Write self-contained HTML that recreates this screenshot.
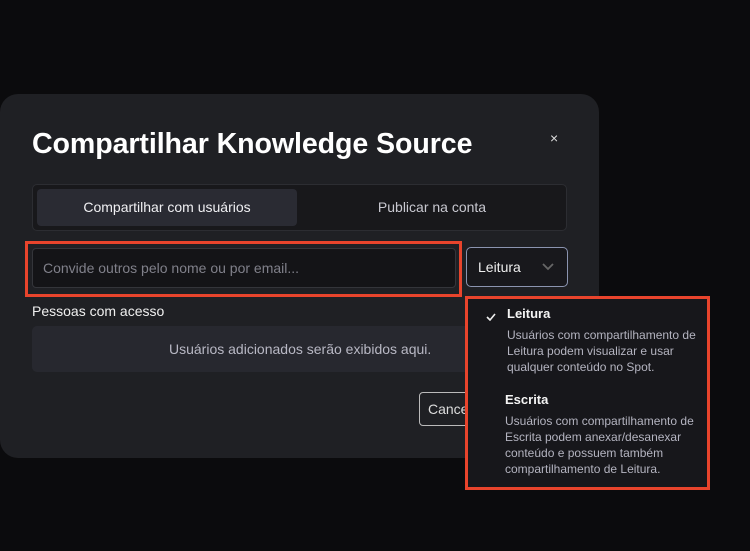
<!DOCTYPE html>
<html><head><meta charset="utf-8"><style>
*{box-sizing:border-box;margin:0;padding:0}
body{width:750px;height:551px;background:#0b0b0d;font-family:"Liberation Sans",sans-serif;position:relative;overflow:hidden;color:#fff}
.a{position:absolute}
.modal{left:0;top:94px;width:599px;height:364px;background:#1f2024;border-radius:18px}
.title{left:32px;top:128px;font-size:28.6px;font-weight:bold;letter-spacing:-0.1px;white-space:nowrap}
.close{left:550px;top:130px;font-size:14px;color:#ddd}
.tabs{left:32px;top:184px;width:535px;height:47px;background:#18181b;border:1px solid #2c2d32;border-radius:5px}
.tab1{left:37px;top:189px;width:260px;height:37px;background:#2a2b33;border-radius:4px;font-size:14px;color:#f0f0f3;text-align:center;line-height:37px}
.tab2{left:298px;top:189px;width:268px;height:37px;font-size:14px;color:#c8c8d0;text-align:center;line-height:37px}
.red{border:3px solid #e8442c}
.inp{left:32px;top:248px;width:424px;height:40px;background:#141417;border:1px solid #34353a;border-radius:4px;font-size:14px;color:#80808a;line-height:38px;padding-left:10px}
.sel{left:466px;top:247px;width:102px;height:40px;border:1px solid #8b94b0;border-radius:5px;background:#18181c;font-size:14px;color:#eee;line-height:38px;padding-left:11px}
.lbl{left:32px;top:303px;font-size:14px;color:#f0f0f0}
.box{left:32px;top:326px;width:535px;height:46px;background:#27282f;border-radius:5px;font-size:14px;color:#b8b8c4;line-height:46px;padding-left:137px}
.btn{left:419px;top:392px;width:60px;height:34px;border:1px solid #bbb;border-radius:4px;font-size:14px;color:#ddd;line-height:32px;padding-left:8px;overflow:hidden}
.dd{left:465px;top:296px;width:245px;height:194px;background:#17171b}
.h{font-size:13px;font-weight:bold;color:#f4f4f4}
.d{font-size:12px;color:#b4b4c0;line-height:16px;white-space:nowrap}
</style></head><body>
<div class="a modal"></div>
<div class="a title">Compartilhar Knowledge Source</div>
<div class="a close">×</div>
<div class="a tabs"></div>
<div class="a tab1">Compartilhar com usuários</div>
<div class="a tab2">Publicar na conta</div>
<div class="a red" style="left:25px;top:241px;width:437px;height:56px"></div>
<div class="a inp">Convide outros pelo nome ou por email...</div>
<div class="a sel">Leitura<svg class="a" style="left:75px;top:15px" width="12" height="8" viewBox="0 0 12 8"><path d="M1 1l5 5 5-5" stroke="#666" stroke-width="1.8" fill="none"/></svg></div>
<div class="a lbl">Pessoas com acesso</div>
<div class="a box">Usuários adicionados serão exibidos aqui.</div>
<div class="a btn">Cancelar</div>
<div class="a dd"></div>
<div class="a red" style="left:465px;top:296px;width:245px;height:194px"></div>
<svg class="a" style="left:486px;top:313px" width="10" height="8" viewBox="0 0 10 8"><path d="M1 4l3 3 5-6" stroke="#eee" stroke-width="1.6" fill="none"/></svg>
<div class="a h" style="left:507px;top:306px">Leitura</div>
<div class="a d" style="left:507px;top:327px">Usuários com compartilhamento de<br>Leitura podem visualizar e usar<br>qualquer conteúdo no Spot.</div>
<div class="a h" style="left:505px;top:392px">Escrita</div>
<div class="a d" style="left:505px;top:413px">Usuários com compartilhamento de<br>Escrita podem anexar/desanexar<br>conteúdo e possuem também<br>compartilhamento de Leitura.</div>
</body></html>
